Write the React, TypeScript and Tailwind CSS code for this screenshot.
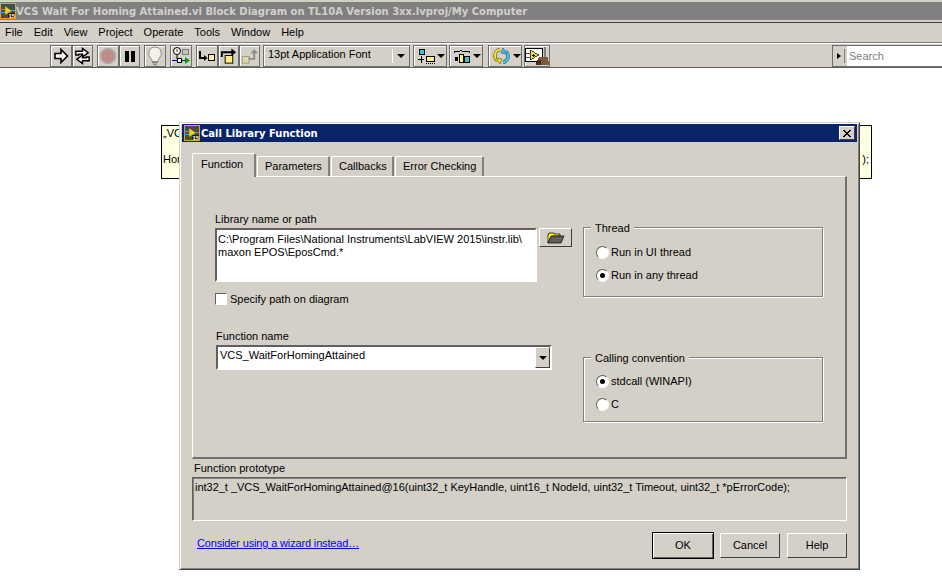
import React from "react";

const Raised = "border border-t-white border-l-white border-r-[#404040] border-b-[#404040] bg-[#d4d0c8]";
const Tool = "border border-[#6e6e6e] shadow-[inset_1px_1px_0_#fff] bg-[#d4d0c8]";

function Icon({ children }: { children: React.ReactNode }) {
  return <svg width="20" height="20" viewBox="0 0 20 20">{children}</svg>;
}

function LvIcon() {
  return (
    <svg width="16" height="16" viewBox="0 0 16 16" className="shrink-0">
      <rect x="0.5" y="0.5" width="15" height="15" fill="#4a4a4a" stroke="#e8a020" />
      <path d="M5 3 L12 8 L5 12 Z" fill="#f0d020" stroke="#806000" strokeWidth="0.5" />
      <rect x="0" y="6" width="5" height="1" fill="#40a0f0" />
      <rect x="0" y="9" width="5" height="1" fill="#40a0f0" />
      <rect x="11" y="7" width="4" height="1" fill="#40a0f0" />
      <rect x="8" y="10" width="7" height="5" fill="#202020" />
      <text x="8.5" y="15" fontSize="6" fontWeight="700" fill="#fff" fontFamily="Liberation Sans, sans-serif">15</text>
    </svg>
  );
}

function Radio({ on }: { on?: boolean }) {
  return (
    <span className="w-[13px] h-[13px] rounded-full bg-white border border-t-[#606060] border-l-[#606060] border-r-white border-b-white flex items-center justify-center shrink-0">
      {on ? <span className="w-[5px] h-[5px] rounded-full bg-black" /> : null}
    </span>
  );
}

function Group({ title, box, options, sel }: { title: string; box: string; options: string[]; sel: number }) {
  return (
    <div className={`relative w-[240px] border border-[#808080] shadow-[1px_1px_0_#fff,inset_1px_1px_0_#fff] ${box}`}>
      <span className="absolute -top-[7px] left-[7px] bg-[#d4d0c8] px-[4px] leading-[14px] whitespace-nowrap">{title}</span>
      <div className="flex flex-col gap-[9px] pl-[12px]">
        {options.map((o, i) => (
          <div key={o} className="flex items-center gap-[2px] h-[14px]">
            <Radio on={i === sel} />
            <span>{o}</span>
          </div>
        ))}
      </div>
    </div>
  );
}

function Tab({ label, active, w }: { label: string; active?: boolean; w: string }) {
  return active ? (
    <div className={`${w} h-[24px] pl-[8px] pt-[2px] bg-[#d4d0c8] border-l border-t border-white border-r-2 border-r-[#808080] rounded-t-[2px] relative z-10 -mb-[1px] whitespace-nowrap`}>
      {label}
    </div>
  ) : (
    <div className={`${w} h-[20px] mt-[3px] pl-[7px] pt-[1px] bg-[#d4d0c8] border-l border-t border-white border-r-2 border-r-[#808080] rounded-t-[2px] ml-[1px] whitespace-nowrap`}>
      {label}
    </div>
  );
}

function ToolBtn({ children, w = "w-[21px]" }: { children: React.ReactNode; w?: string }) {
  return <div className={`${w} h-[22px] flex items-center justify-center ${Tool}`}>{children}</div>;
}

const Caret = () => <span className="w-0 h-0 border-x-[4px] border-x-transparent border-t-[4px] border-t-black" />;

export default function App() {
  return (
    <div className="relative w-[942px] h-[585px] bg-white overflow-hidden text-[11px] text-black font-['Liberation_Sans',sans-serif]">
      {/* Main window chrome */}
      <div className="h-[2px] bg-[#d4d0c8]" />
      <div className="h-[18px] bg-[#808080] flex items-center text-[#d4d0c8] font-['DejaVu_Sans',sans-serif] font-bold text-[10px]">
        <LvIcon />
        <span className="whitespace-nowrap">VCS Wait For Homing Attained.vi Block Diagram on TL10A Version 3xx.lvproj/My Computer</span>
      </div>
      <div className="h-[2px] bg-[#d4d0c8]" />
      <div className="h-[1px] bg-[#404040]" />
      <div className="h-[19px] bg-[#d4d0c8] flex items-center pl-[5px] gap-[11px] pb-[1px] text-[11px]">
        {["File", "Edit", "View", "Project", "Operate", "Tools", "Window", "Help"].map((m) => (
          <span key={m}>{m}</span>
        ))}
      </div>
      <div className="h-[1px] bg-[#808080]" />
      <div className="h-[1px] bg-white" />
      <div className="h-[24px] bg-[#d4d0c8] border-b border-[#606060] flex items-start pl-[50px] pt-[1px]">
        <ToolBtn w="w-[22px]">
          <svg width="16" height="16" viewBox="0 0 16 16"><path d="M2 5.5h6V1.5l6.5 6.5-6.5 6.5v-4H2z" fill="#fff" stroke="#000" strokeWidth="1.6" /></svg>
        </ToolBtn>
        <ToolBtn>
          <Icon>
            <path d="M3 9V5h7V2l6 4.5-6 4.5V8H6v1z" fill="#fff" stroke="#000" strokeWidth="1.5" />
            <path d="M17 11v4h-7v3l-6-4.5L10 9v3h4v-1z" fill="#fff" stroke="#000" strokeWidth="1.5" />
          </Icon>
        </ToolBtn>
        <div className="w-[4px] shrink-0" />
        <ToolBtn w="w-[22px]">
          <span className="w-[16px] h-[16px] rounded-full bg-[#c08a88] border-2 border-[#a8a49c]" />
        </ToolBtn>
        <ToolBtn>
          <span className="flex gap-[2px]">
            <span className="w-[4px] h-[11px] bg-black" />
            <span className="w-[4px] h-[11px] bg-black" />
          </span>
        </ToolBtn>
        <div className="w-[4px] shrink-0" />
        <ToolBtn w="w-[22px]">
          <svg width="16" height="20" viewBox="0 0 16 20">
            <path d="M8 1a6.5 6.5 0 0 0-4 11.5c1 1 1 2 1 3h6c0-1 0-2 1-3A6.5 6.5 0 0 0 8 1z" fill="#f4f2e8" stroke="#8a8a8a" />
            <path d="M5 16.5h6M6 18.5h4" stroke="#8a8a8a" fill="none" strokeWidth="1.5" />
          </svg>
        </ToolBtn>
        <div className="w-[4px] shrink-0" />
        <ToolBtn w="w-[22px]">
          <Icon>
            <circle cx="6" cy="5" r="3.5" fill="#fff" stroke="#000" />
            <path d="M6 3.5v2" stroke="#000" />
            <path d="M6 9v4" stroke="#000" />
            <rect x="11.5" y="3.5" width="6" height="5" fill="#c0c0c0" stroke="#808080" />
            <path d="M1 14.5h15" stroke="#0000c0" />
            <rect x="6.5" y="12.5" width="4" height="4" fill="#fff" stroke="#000" />
            <path d="M14 11l5 3.5-5 3.5z" fill="#00a000" />
          </Icon>
        </ToolBtn>
        <div className="w-[4px] shrink-0" />
        <ToolBtn w="w-[22px]">
          <Icon>
            <path d="M3 5v7h5" fill="none" stroke="#000" strokeWidth="2" />
            <path d="M7 9l3.5 3L7 15z" fill="#000" />
            <rect x="11.5" y="8.5" width="6" height="6" fill="#fff080" stroke="#000" />
          </Icon>
        </ToolBtn>
        <ToolBtn>
          <Icon>
            <path d="M3 11V6h11" fill="none" stroke="#000" strokeWidth="2" />
            <path d="M13 2l5 4-5 4z" fill="#000" />
            <rect x="6.5" y="9.5" width="8" height="8" fill="#fff080" stroke="#000" />
          </Icon>
        </ToolBtn>
        <ToolBtn>
          <Icon>
            <rect x="2.5" y="10.5" width="7" height="7" fill="#e0d8a8" stroke="#a09880" />
            <path d="M9 13h6V6" fill="none" stroke="#908c80" strokeWidth="2" />
            <path d="M11 7l4-4 4 4z" fill="#908c80" />
          </Icon>
        </ToolBtn>
        <div className="w-[3px] shrink-0" />
        <div className={`w-[147px] h-[22px] flex items-center justify-between pl-[4px] ${Tool}`}>
          <span className="text-[11px] whitespace-nowrap pb-[3px]">13pt Application Font</span>
          <span className="flex items-center gap-[4px] pr-[4px]">
            <span className="w-[1px] h-[14px] bg-white" />
            <Caret />
          </span>
        </div>
        <div className="w-[3px] shrink-0" />
        <div className={`w-[34px] h-[22px] flex items-center pl-[4px] gap-[1px] ${Tool}`}>
          <svg width="18" height="15" viewBox="0 0 18 15" shapeRendering="crispEdges">
            <rect x="1.5" y="0.5" width="5" height="5" fill="#40c0e0" stroke="#000" />
            <path d="M0 10h6M3.5 7v7" stroke="#000" />
            <rect x="8.5" y="7.5" width="8" height="5" fill="#fff080" stroke="#000" />
            <path d="M8 14h9" stroke="#000" strokeDasharray="1 1" />
          </svg>
          <Caret />
        </div>
        <div className="w-[2px] shrink-0" />
        <div className={`w-[34px] h-[22px] flex items-center pl-[3px] gap-[1px] ${Tool}`}>
          <svg width="19" height="15" viewBox="0 0 19 15" shapeRendering="crispEdges">
            <path d="M1 4V2h6l1-1 1 1h7v2" fill="none" stroke="#000" />
            <rect x="2" y="8" width="3" height="4" fill="#000" />
            <rect x="6.5" y="5.5" width="4" height="8" fill="#fff080" stroke="#000" />
            <rect x="11.5" y="7.5" width="5" height="6" fill="#40c0e0" stroke="#000" />
          </svg>
          <Caret />
        </div>
        <div className="w-[5px] shrink-0" />
        <div className={`w-[34px] h-[22px] flex items-center pl-[2px] gap-[1px] ${Tool}`}>
          <svg width="21" height="18" viewBox="0 0 21 18">
            <path d="M9 2.5a6.5 6.5 0 0 0-5 6.5c0 2 1 3.5 2.5 4.5" fill="none" stroke="#6a6a20" strokeWidth="3.6" />
            <path d="M9 2.5a6.5 6.5 0 0 0-5 6.5c0 2 1 3.5 2.5 4.5" fill="none" stroke="#f0e020" strokeWidth="2.2" />
            <path d="M5 11l6 1-2 5z" fill="#f0e020" stroke="#6a6a20" strokeWidth="0.7" />
            <path d="M12 15.5a6.5 6.5 0 0 0 5-6.5c0-2-1-3.5-2.5-4.5" fill="none" stroke="#206a80" strokeWidth="3.6" />
            <path d="M12 15.5a6.5 6.5 0 0 0 5-6.5c0-2-1-3.5-2.5-4.5" fill="none" stroke="#50c0e0" strokeWidth="2.2" />
            <path d="M16 7l-6-1 2-5z" fill="#50c0e0" stroke="#206a80" strokeWidth="0.7" />
          </svg>
          <Caret />
        </div>
        <div className="w-[2px] shrink-0" />
        <div className={`w-[26px] h-[22px] flex items-center justify-center ${Tool}`}>
          <svg width="24" height="19" viewBox="0 0 24 19" shapeRendering="crispEdges">
            <rect x="0.5" y="1.5" width="17" height="13" fill="#fff" stroke="#000" />
            <path d="M5 3l9 5-9 5z" fill="#f0e040" stroke="#000" strokeWidth="0.7" />
            <path d="M7 8h3M8.5 6.5v3" stroke="#000" />
            <path d="M1 6h4" stroke="#d02020" />
            <path d="M1 10h4" stroke="#2040d0" />
            <rect x="19" y="0" width="2" height="10" fill="#808080" />
            <path d="M14 10h9l1 8H11z" fill="#7a5a38" />
            <path d="M12 13h4v5h-5z" fill="#4a3018" />
          </svg>
        </div>
        <div className="flex-1" />
        <div className="w-[110px] h-[22px] border-l border-t border-b border-[#6e6e6e] flex items-center bg-[#d4d0c8]">
          <span className="w-0 h-0 ml-[4px] border-y-[3px] border-y-transparent border-l-[4px] border-l-black" />
          <span className="w-[1px] h-[14px] bg-[#808080] ml-[3px]" />
          <span className="flex-1 h-full bg-white ml-[2px] pl-[2px] leading-[20px] text-[#808080] text-[11px]">Search</span>
        </div>
      </div>

      {/* Free note on the diagram behind the dialog */}
      <div className="absolute left-[161px] top-[125px] w-[711px] h-[54px] bg-[#ffffe1] border border-black flex flex-col pl-[1px] text-[11px]">
        <div className="leading-[12px] mt-[1px]">„VCS</div>
        <div className="flex justify-between pr-[2px] leading-[14px] mt-[13px]">
          <span>Hom</span>
          <span>);</span>
        </div>
      </div>

      {/* Dialog window */}
      <div className="absolute left-[179px] top-[122px] w-[681px] h-[448px] bg-[#d4d0c8] border border-t-[#d4d0c8] border-l-[#d4d0c8] border-r-[#404040] border-b-[#404040] shadow-[inset_1px_1px_0_#fff,inset_-1px_-1px_0_#808080] px-[2px] pt-[1px] pb-[2px] flex flex-col">
        <div className="h-[18px] bg-[#0a246a] flex items-center text-white font-['DejaVu_Sans',sans-serif] font-bold text-[10px] shrink-0 pl-[2px]">
          <LvIcon />
          <span className="ml-[1px]">Call Library Function</span>
          <div className={`ml-auto mr-[2px] w-[16px] h-[14px] flex items-center justify-center ${Raised}`}>
            <svg width="8" height="7" viewBox="0 0 8 7" shapeRendering="crispEdges">
              <path d="M0 0h2v1h1v1h2V1h1V0h2v1H7v1H6v1H5v1h1v1h1v1h1v1H6V6H5V5H3v1H2v1H0V6h1V5h1V4h1V3H2V2H1V1H0z" fill="#000" />
            </svg>
          </div>
        </div>

        <div className="flex flex-col pl-[10px] pr-[10px] pt-[11px] shrink-0">
          <div className="flex h-[23px] items-start">
            <Tab label="Function" active w="w-[64px]" />
            <Tab label="Parameters" w="w-[73px]" />
            <Tab label="Callbacks" w="w-[63px]" />
            <Tab label="Error Checking" w="w-[89px]" />
          </div>
          <div className="h-[283px] border-l border-t border-white border-r-2 border-r-[#707070] border-b-2 border-b-[#707070] flex pt-[35px] pl-[22px]">
            <div className="w-[339px] flex flex-col shrink-0">
              <div className="leading-[14px] h-[16px]">Library name or path</div>
              <div className="flex">
                <div className="w-[322px] h-[54px] shrink-0 bg-white border-2 border-t-[#606060] border-l-[#606060] border-r-white border-b-white pl-[1px] pt-[3px] leading-[13px] whitespace-nowrap">
                  C:\Program Files\National Instruments\LabVIEW 2015\instr.lib\
                  <br />
                  maxon EPOS\EposCmd.*
                </div>
                <div className={`ml-[2px] w-[33px] h-[19px] shrink-0 flex items-center justify-center ${Raised}`}>
                  <svg width="18" height="12" viewBox="0 0 18 12">
                    <path d="M1 11V2h1V1h5v1h6v2H5l-4 7z" fill="#ffff00" stroke="#000" strokeWidth="0.7" />
                    <path d="M1 11l3-7h13l-3 7z" fill="#606060" stroke="#000" strokeWidth="0.7" />
                  </svg>
                </div>
              </div>
              <div className="flex items-center gap-[3px] mt-[10px] h-[14px]">
                <span className="w-[12px] h-[12px] bg-white border border-t-[#606060] border-l-[#606060] border-r-white border-b-white" />
                <span>Specify path on diagram</span>
              </div>
              <div className="mt-[23px] leading-[14px] h-[16px] pl-[1px]">Function name</div>
              <div className="w-[336px] h-[25px] ml-[1px] bg-white border-2 border-t-[#606060] border-l-[#606060] border-r-white border-b-white flex justify-between">
                <span className="pl-[2px] pt-[1px] leading-[14px]">VCS_WaitForHomingAttained</span>
                <span className={`w-[15px] h-[21px] flex items-center justify-center ${Raised}`}>
                  <Caret />
                </span>
              </div>
            </div>
            <div className="flex flex-col ml-[29px] pt-[15px] gap-[60px]">
              <Group title="Thread" box="h-[70px] pt-[17px]" options={["Run in UI thread", "Run in any thread"]} sel={1} />
              <Group title="Calling convention" box="h-[65px] pt-[16px]" options={["stdcall (WINAPI)", "C"]} sel={0} />
            </div>
          </div>
          <div className="leading-[14px] mt-[2px] h-[16px] pl-[2px]">Function prototype</div>
          <div className="h-[44px] border border-t-[#606060] border-l-[#606060] border-r-white border-b-white shadow-[inset_1px_1px_0_#808080] pl-[2px] pt-[2px] leading-[14px] tracking-[-0.025px]">
            int32_t _VCS_WaitForHomingAttained@16(uint32_t KeyHandle, uint16_t NodeId, uint32_t Timeout, uint32_t *pErrorCode);
          </div>
          <div className="flex items-start justify-between mt-[11px]">
            <a className="text-[#0000ff] underline ml-[5px] leading-[14px] mt-[4px] tracking-[-0.15px]">Consider using a wizard instead…</a>
            <div className="flex gap-[6px]">
              <div className="w-[62px] h-[27px] border border-black flex items-center justify-center bg-[#d4d0c8] shadow-[inset_1px_1px_0_#fff,inset_-1px_-1px_0_#606060]">OK</div>
              <div className={`w-[60px] h-[25px] mt-[1px] flex items-center justify-center ${Raised}`}>Cancel</div>
              <div className={`w-[60px] h-[25px] mt-[1px] ml-[1px] flex items-center justify-center ${Raised}`}>Help</div>
            </div>
          </div>
        </div>
      </div>
    </div>
  );
}
